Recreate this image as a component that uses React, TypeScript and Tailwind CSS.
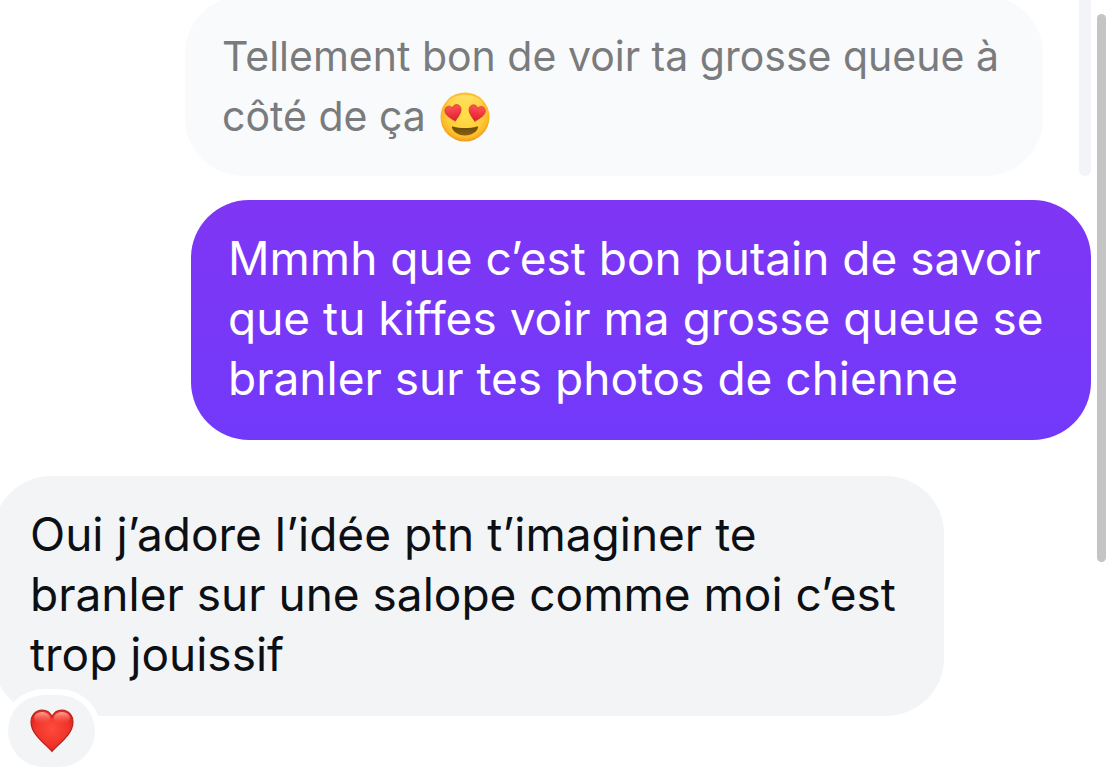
import type { ReactNode } from "react";

const HEART =
  "M22 42.500C17 36 1 26 1 13C1 6 6 1 12 1C17 1 20.500 4 22 8C23.500 4 27 1 32 1C38 1 43 6 43 13C43 26 27 36 22 42.500Z";

function HeartEyes() {
  return (
    <svg
      viewBox="0 0 50 50"
      role="img"
      aria-label="😍"
      className="mb-1.5 ml-[3px] inline-block size-[50px] align-middle"
    >
      <defs>
        <radialGradient id="face" cx="0.5" cy="0.45" r="0.56">
          <stop offset="0" stopColor="#ffe14a" />
          <stop offset="0.6" stopColor="#ffd03a" />
          <stop offset="0.85" stopColor="#fbb928" />
          <stop offset="1" stopColor="#ec9319" />
        </radialGradient>
        <linearGradient id="shine" x1="0" y1="0" x2="0" y2="1">
          <stop offset="0" stopColor="#fff08a" stopOpacity="0.6" />
          <stop offset="1" stopColor="#ffe04a" stopOpacity="0" />
        </linearGradient>
        <linearGradient id="eye" x1="0" y1="0" x2="0" y2="1">
          <stop offset="0" stopColor="#fb5a58" />
          <stop offset="0.5" stopColor="#ef3640" />
          <stop offset="1" stopColor="#d81f30" />
        </linearGradient>
        <linearGradient id="mouth" x1="0" y1="0" x2="0" y2="1">
          <stop offset="0" stopColor="#6b4a0a" />
          <stop offset="1" stopColor="#8a600c" />
        </linearGradient>
      </defs>
      <circle cx="25" cy="25" r="24.500" fill="url(#face)" />
      <ellipse cx="25" cy="13" rx="18" ry="10" fill="url(#shine)" />
      <path
        d="M13 34.500C20 36.500 30 36.500 37 34.500C37.800 34.300 38.300 34.800 38 35.800C36.500 40.500 31 43.500 25 43.500C19 43.500 13.500 40.500 12 35.800C11.700 34.800 12.200 34.300 13 34.500Z"
        fill="url(#mouth)"
      />
      <g transform="translate(5 13) rotate(-12 8 8) scale(0.39)">
        <path d={HEART} fill="url(#eye)" stroke="#d42a2a" strokeWidth="1.500" />
      </g>
      <g transform="translate(28 13) rotate(12 8 8) scale(0.39)">
        <path d={HEART} fill="url(#eye)" stroke="#d42a2a" strokeWidth="1.500" />
      </g>
    </svg>
  );
}

function RedHeart() {
  return (
    <svg viewBox="0 0 44 44" role="img" aria-label="❤️" className="size-11">
      <defs>
        <radialGradient id="heart" cx="0.5" cy="0.45" r="0.6">
          <stop offset="0" stopColor="#ff4a3c" />
          <stop offset="0.65" stopColor="#f0342b" />
          <stop offset="1" stopColor="#d91f1c" />
        </radialGradient>
        <linearGradient id="gloss" x1="0" y1="0" x2="0" y2="1">
          <stop offset="0" stopColor="#ffb5a8" stopOpacity="0.9" />
          <stop offset="1" stopColor="#ff5a4a" stopOpacity="0" />
        </linearGradient>
      </defs>
      <path d={HEART} fill="url(#heart)" stroke="#b8211c" strokeWidth="1.200" />
      <ellipse cx="12" cy="9" rx="8" ry="6" fill="url(#gloss)" />
      <ellipse cx="32" cy="9" rx="8" ry="6" fill="url(#gloss)" />
    </svg>
  );
}

function Bubble({ className, children }: { className: string; children: ReactNode }) {
  return (
    <div className={`rounded-[58px] px-[37px] leading-[60px] ${className}`}>
      {children}
    </div>
  );
}

export default function App() {
  return (
    <main className="flex min-h-screen overflow-hidden bg-white pr-[9px] font-['Inter',sans-serif]">
      <section className="flex min-w-0 flex-1 flex-col">
        <blockquote className="-mt-1 flex justify-end gap-9">
          <Bubble className="max-w-[858px] bg-[#f9fafc] pt-[30px] pb-7 text-[41px] text-[#7a7b7d]">
            <p>
              Tellement bon de voir ta grosse queue à côté de ça <HeartEyes />
            </p>
          </Bubble>
          <span className="w-3 shrink-0 rounded-b-full bg-[#f3f4f7]" />
        </blockquote>

        <Bubble className="mt-6 max-w-[900px] self-end bg-linear-to-b from-[#7f36f4] to-[#7239fa] pt-7 pb-8 text-[46px] text-white">
          <p>
            Mmmh que c’est bon putain de savoir que tu kiffes voir ma grosse queue se branler sur tes
            photos de chienne
          </p>
        </Bubble>

        <div className="relative mt-9 -ml-[7px] max-w-[951px]">
          <Bubble className="bg-[#f3f4f6] pt-7 pb-8 text-[46px] text-[#0c1014]">
            <p>
              Oui j’adore l’idée ptn t’imaginer te branler sur une salope comme moi c’est trop
              jouissif
            </p>
          </Bubble>
          <button
            type="button"
            aria-label="Réaction ❤️"
            className="absolute -bottom-[51px] left-[15px] flex h-[72px] w-[87px] items-center justify-center rounded-full bg-[#f3f4f6] ring-6 ring-white"
          >
            <RedHeart />
          </button>
        </div>
      </section>

      <div className="mt-3.5 ml-1.5 h-[548px] w-[9px] shrink-0 rounded-full bg-[#c4c4c4]" />
    </main>
  );
}
